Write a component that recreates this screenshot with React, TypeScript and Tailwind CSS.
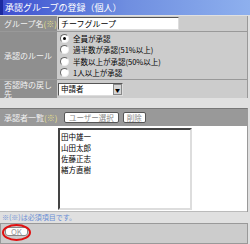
import React from 'react';

const rules = [
  { label: '全員が承認', checked: true },
  { label: '過半数が承認(51%以上)', checked: false },
  { label: '半数以上が承認(50%以上)', checked: false },
  { label: '1人以上が承認', checked: false },
];

const approvers = ['田中雄一', '山田太郎', '佐藤正志', '緒方直樹'];

const Radio = ({ checked }: { checked: boolean }) => (
  <span className="w-[9px] h-[9px] rounded-full bg-white border border-t-[#666] border-l-[#666] border-r-[#eee] border-b-[#eee] flex items-center justify-center shrink-0">
    {checked && <span className="w-[3px] h-[3px] rounded-full bg-black" />}
  </span>
);

const Required = () => <span className="text-[#e8e08a]">(※)</span>;

export default function App() {
  return (
    <div
      className="w-[250px] h-[244px] bg-[#e0e0e0] flex flex-col text-[8px] leading-none overflow-hidden"
      style={{ fontFamily: '"Noto Sans CJK JP", "Liberation Sans", sans-serif' }}
    >
      {/* タイトル */}
      <div className="h-[15px] shrink-0 border-l-[3px] border-[#1c2aa0] bg-gradient-to-r from-[#3f4fd0] via-[#6f8ee0] to-[#8eb0ee] text-white text-[9px] leading-[15px] pl-[2px]">
        承認グループの登録（個人）
      </div>

      {/* 基本設定 */}
      <div className="mt-px w-[248px] border-r border-[#999] grid grid-cols-[57px_1fr] bg-[#cccccc]">
        <div className="h-[16px] bg-[#8f8f8f] text-[#f2f2f2] flex items-center pl-[4px] border-b border-[#999] whitespace-nowrap">
          グループ名<Required />
        </div>
        <div className="h-[16px] flex items-center pl-px border-b border-[#999]">
          <div className="w-[121px] h-[13px] bg-white border border-t-[#555] border-l-[#555] border-r-[#ddd] border-b-[#ddd] flex items-center pl-[2px] text-black">
            チーフグループ
          </div>
        </div>

        <div className="h-[48px] bg-[#8f8f8f] text-[#f2f2f2] flex items-center pl-[4px] border-b border-[#999]">
          承認のルール
        </div>
        <div className="h-[48px] flex flex-col justify-center gap-px pl-[3px] border-b border-[#999] text-black text-[7.5px]">
          {rules.map((r) => (
            <div key={r.label} className="h-[10.5px] flex items-center gap-[4px] whitespace-nowrap">
              <Radio checked={r.checked} />
              {r.label}
            </div>
          ))}
        </div>

        <div className="h-[18px] bg-[#8f8f8f] text-[#f2f2f2] flex flex-col pl-[4px] leading-[9px]">
          <span>否認時の戻し</span>
          <span>先</span>
        </div>
        <div className="h-[18px] flex items-center pl-px">
          <div className="w-[65px] h-[13px] bg-white border border-t-[#555] border-l-[#555] border-r-[#ddd] border-b-[#ddd] flex items-center text-black text-[7.5px]">
            <span className="flex-1 pl-[2px]">申請者</span>
            <span className="w-[9px] h-[11px] bg-[#d4d4d4] border border-[#888] flex items-center justify-center text-[5px] text-black">
              ▼
            </span>
          </div>
        </div>
      </div>

      {/* 承認者一覧 */}
      <div className="mt-[10px] w-[248px] border-r border-[#999] border-t border-t-[#777] flex flex-col">
        <div className="h-[17px] bg-[#999999] flex items-center">
          <div className="w-[57px] pl-[4px] text-[#f2f2f2] whitespace-nowrap">
            承認者一覧<Required />
          </div>
          <div className="flex items-center gap-[4px] pl-[7px]">
            <button className="h-[11px] px-[4px] bg-white border border-[#555] rounded-[2px] text-[#888] text-[7.5px] leading-none">
              ユーザー選択
            </button>
            <button className="h-[11px] px-[3px] bg-white border border-[#555] rounded-[2px] text-[#888] text-[7.5px] leading-none">
              削除
            </button>
          </div>
        </div>
        <div className="h-[86px] bg-white pl-[58px] pt-[2px] border-b border-[#bbb]">
          <div className="w-[134px] h-[82px] border-2 border-t-[#444] border-l-[#444] border-r-[#ddd] border-b-[#ddd] pl-px pt-px text-black text-[7.5px]">
            {approvers.map((a) => (
              <div key={a} className="h-[11px] leading-[11px]">
                {a}
              </div>
            ))}
          </div>
        </div>
      </div>

      <div className="h-[11px] shrink-0 pl-[2px] flex items-center text-[#6b8fd6] text-[7px]">
        ※(※)は必須項目です。
      </div>

      {/* フッター */}
      <div className="flex-1 w-[248px] bg-[#cccccc] border border-[#999] relative flex items-start pt-[3px] pl-[4px]">
        <button className="w-[23px] h-[9px] bg-white border border-[#888] rounded-[3px] text-[#999] text-[8px] leading-none">
          OK
        </button>
        <span className="absolute left-[1px] top-0 w-[29px] h-[17px] rounded-[50%] border-2 border-[#e01010]" />
      </div>
    </div>
  );
}
